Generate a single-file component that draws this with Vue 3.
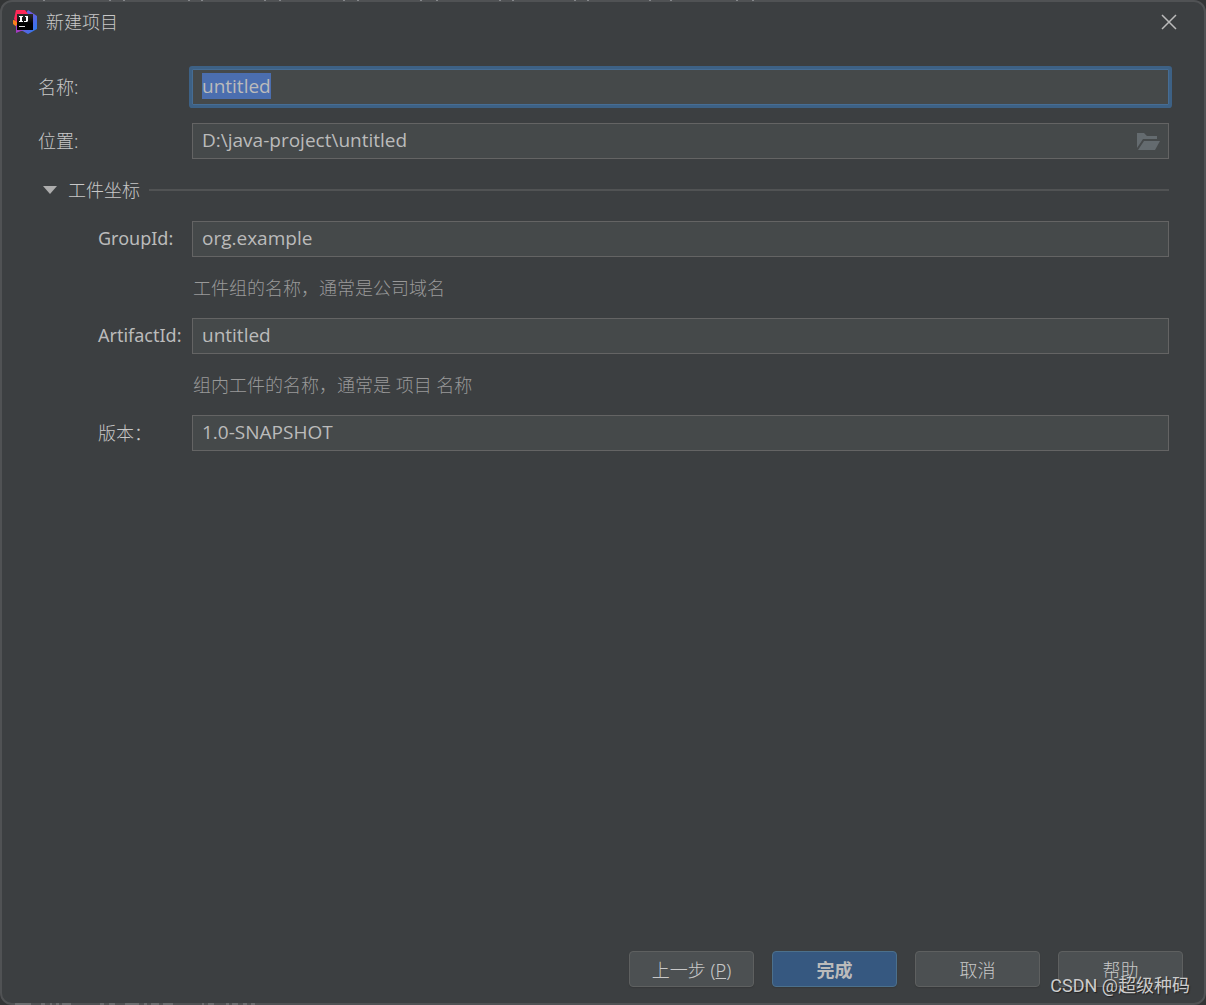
<script setup>
import { onMounted, ref } from 'vue'

const name = ref('untitled')
const location = ref('D:\\java-project\\untitled')
const groupId = ref('org.example')
const artifactId = ref('untitled')
const version = ref('1.0-SNAPSHOT')
const nameInput = ref(null)

onMounted(() => {
  nameInput.value.focus()
  nameInput.value.select()
})
</script>

<template>
  <div class="desktop">
    <main class="dialog">
      <header class="titlebar">
        <svg class="logo" viewBox="0 0 24 24" aria-hidden="true">
          <defs>
            <linearGradient id="blue" x1="0" y1="0" x2="1" y2="1">
              <stop offset="0" stop-color="#3b6cf0" />
              <stop offset="0.4" stop-color="#7059dc" />
              <stop offset="1" stop-color="#1f80f0" />
            </linearGradient>
            <linearGradient id="tile" x1="0" y1="0" x2="0" y2="1">
              <stop offset="0" stop-color="#2c2c2c" />
              <stop offset="0.6" stop-color="#000" />
            </linearGradient>
          </defs>
          <path d="M0 10L5 11V18L0 14Z" fill="#f9801d" />
          <path d="M3 15H16L14 21L8 21L3 23Z" fill="#a33bc0" />
          <path d="M13 3L15 0L24 6V19L15 24L8 20Z" fill="url(#blue)" />
          <path d="M3 0H12L15 4L6 15L1 9Z" fill="#fe2857" />
          <rect x="4" y="4" width="16" height="16" fill="url(#tile)" />
          <path d="M6 6H10V7H9V11H10V12H6V11H7V7H6ZM12 6H15V11L14 12H11V11H13V7H12Z" fill="#fff" />
          <path d="M6 16H12V17H6Z" fill="#ddd" />
        </svg>
        <h1>新建项目</h1>
        <button class="close" type="button" aria-label="关闭">
          <svg viewBox="0 0 16 16" aria-hidden="true"><path d="M1 1L15 15M15 1L1 15" /></svg>
        </button>
      </header>

      <form class="form" @submit.prevent>
        <div class="row">
          <label for="name">名称:</label>
          <input id="name" ref="nameInput" v-model="name" class="field" type="text" />
        </div>
        <div class="row spaced">
          <label for="location">位置:</label>
          <div class="picker">
            <input id="location" v-model="location" class="field" type="text" />
            <button class="browse" type="button" aria-label="浏览">
              <svg viewBox="0 0 24 18" aria-hidden="true">
                <path d="M1 0H8L11 3H21V6H7L1 15Z" />
                <path d="M8 8H24L19 17H2Z" />
              </svg>
            </button>
          </div>
        </div>

        <button class="section" type="button" aria-expanded="true">
          <svg viewBox="0 0 14 8" aria-hidden="true"><path d="M0 0H14L7 8Z" /></svg>
          <span>工件坐标</span>
          <i class="rule"></i>
        </button>

        <div class="row nested">
          <label for="group" class="latin">GroupId:</label>
          <input id="group" v-model="groupId" class="field" type="text" aria-describedby="group-hint" />
        </div>
        <p id="group-hint" class="hint">工件组的名称，通常是公司域名</p>
        <div class="row nested">
          <label for="artifact" class="latin">ArtifactId:</label>
          <input id="artifact" v-model="artifactId" class="field" type="text" aria-describedby="artifact-hint" />
        </div>
        <p id="artifact-hint" class="hint">组内工件的名称，通常是 项目 名称</p>
        <div class="row nested">
          <label for="version">版本：</label>
          <input id="version" v-model="version" class="field" type="text" />
        </div>
      </form>

      <footer class="actions">
        <button type="button">上一步 (<u>P</u>)</button>
        <button type="button" class="primary">完成</button>
        <button type="button">取消</button>
        <button type="button">帮助</button>
      </footer>
    </main>
    <!-- slivers of the editor window behind the dialog -->
    <svg class="behind top" width="760" height="2" aria-hidden="true">
      <path d="M43 0h2M109 0h2M123 0h2M188 0h2M201 0h2M264 0h2M279 0h2M343 0h2M357 0h2M420 0h2M436 0h2M499 0h2M512 0h2M574 0h2M587 0h2M649 0h2M670 0h2M736 0h2M752 0h2" />
    </svg>
    <svg class="behind bottom" width="260" height="2" aria-hidden="true">
      <path d="M15 1h16M41 1h4M50 1h2M56 1h3M62 1h9M100 1h4M109 1h6M125 1h14M144 1h3M151 1h8M163 1h10M202 1h2M208 1h6M226 1h3M232 1h6M243 1h4M251 1h4" />
    </svg>
    <span class="watermark">CSDN @超级种码</span>
  </div>
</template>

<style>
body {
  margin: 0;
  background: #333536;
}
</style>

<style scoped>
.desktop {
  position: relative;
  font-family: "Noto Sans", "Noto Sans CJK SC", sans-serif;
  font-size: 18px;
  line-height: 26px;
  color: #bbbbbb;
}
* {
  box-sizing: border-box;
}
.dialog {
  display: flex;
  flex-direction: column;
  min-height: 100vh;
  border: 2px solid #505254;
  border-radius: 12px;
  background: #3c3f41;
}
button,
input {
  font: inherit;
  color: inherit;
}
button {
  padding: 0;
}
.titlebar {
  display: flex;
  align-items: center;
  height: 40px;
  padding: 0 27px 0 11px;
}
.logo {
  width: 24px;
  height: 24px;
}
h1 {
  margin: 0 auto 0 9px;
  font-size: 18px;
  font-weight: 300;
  color: #c8c8c8;
}
.close {
  display: flex;
  border: 0;
  background: none;
}
.close svg {
  width: 16px;
  height: 16px;
  stroke: #bbbbbb;
  stroke-width: 1.5;
}
.form {
  padding: 27px 35px 0 36px;
}
.row {
  display: grid;
  grid-template-columns: 154px 1fr;
  align-items: center;
}
.spaced {
  margin-top: 18px;
}
.nested label {
  padding-left: 60px;
}
label {
  white-space: nowrap;
  font-weight: 300;
  color: #c8c8c8;
}
.latin {
  padding-bottom: 2px;
  font-weight: 400;
  color: #bbbbbb;
}
.field {
  width: 100%;
  height: 36px;
  padding: 0 9px 2px;
  border: 1px solid #646464;
  border-radius: 0;
  outline: 0;
  background: #45494a;
  font-family: "Open Sans", "Noto Sans CJK SC", sans-serif;
  font-size: 19px;
}
.field:focus {
  border-color: #466d94;
  box-shadow: 0 0 0 3px #3d6185;
  border-radius: 1px;
}
.field::selection {
  background: #4b6eaf;
  color: #bbbbbb;
}
.picker {
  position: relative;
}
.browse {
  position: absolute;
  top: 10px;
  right: 9px;
  display: flex;
  border: 0;
  background: none;
}
.browse svg {
  width: 24px;
  height: 18px;
  fill: #646b6f;
}
.section {
  display: flex;
  align-items: center;
  width: 100%;
  height: 62px;
  padding: 0 0 0 5px;
  border: 0;
  background: none;
  color: #c8c8c8;
}
.section svg {
  width: 14px;
  height: 8px;
  margin-right: 11px;
  fill: #adadad;
}
.rule {
  flex: 1;
  height: 2px;
  margin-left: 9px;
  background: #515354;
}
.hint {
  display: flex;
  align-items: center;
  height: 61px;
  margin: 0;
  padding-left: 155px;
  color: #999999;
}
.section,
.hint,
.actions button {
  font-weight: 300;
}
.actions {
  display: flex;
  justify-content: flex-end;
  gap: 18px;
  margin-top: auto;
  padding: 24px 21px 16px;
}
.actions button {
  width: 125px;
  height: 36px;
  padding-top: 2px;
  border: 1px solid #5e6060;
  border-radius: 4px;
  background: #4c5052;
  box-shadow: 0 1px 1px #36383a;
  color: #c8c8c8;
}
.actions .primary {
  border-color: #4c708c;
  background: #365880;
  font-weight: 700;
  color: #bbbbbb;
}
.behind {
  position: absolute;
  left: 0;
  stroke: #85878a;
  stroke-width: 2;
}
.top {
  top: 0;
}
.bottom {
  bottom: 0;
  stroke: #6c6e70;
}
.watermark {
  position: absolute;
  right: 16px;
  bottom: 6px;
  font-family: Roboto, "Noto Sans CJK SC", sans-serif;
  color: #cccccc;
  text-shadow: 1px 1px 1px #222222;
}
</style>
